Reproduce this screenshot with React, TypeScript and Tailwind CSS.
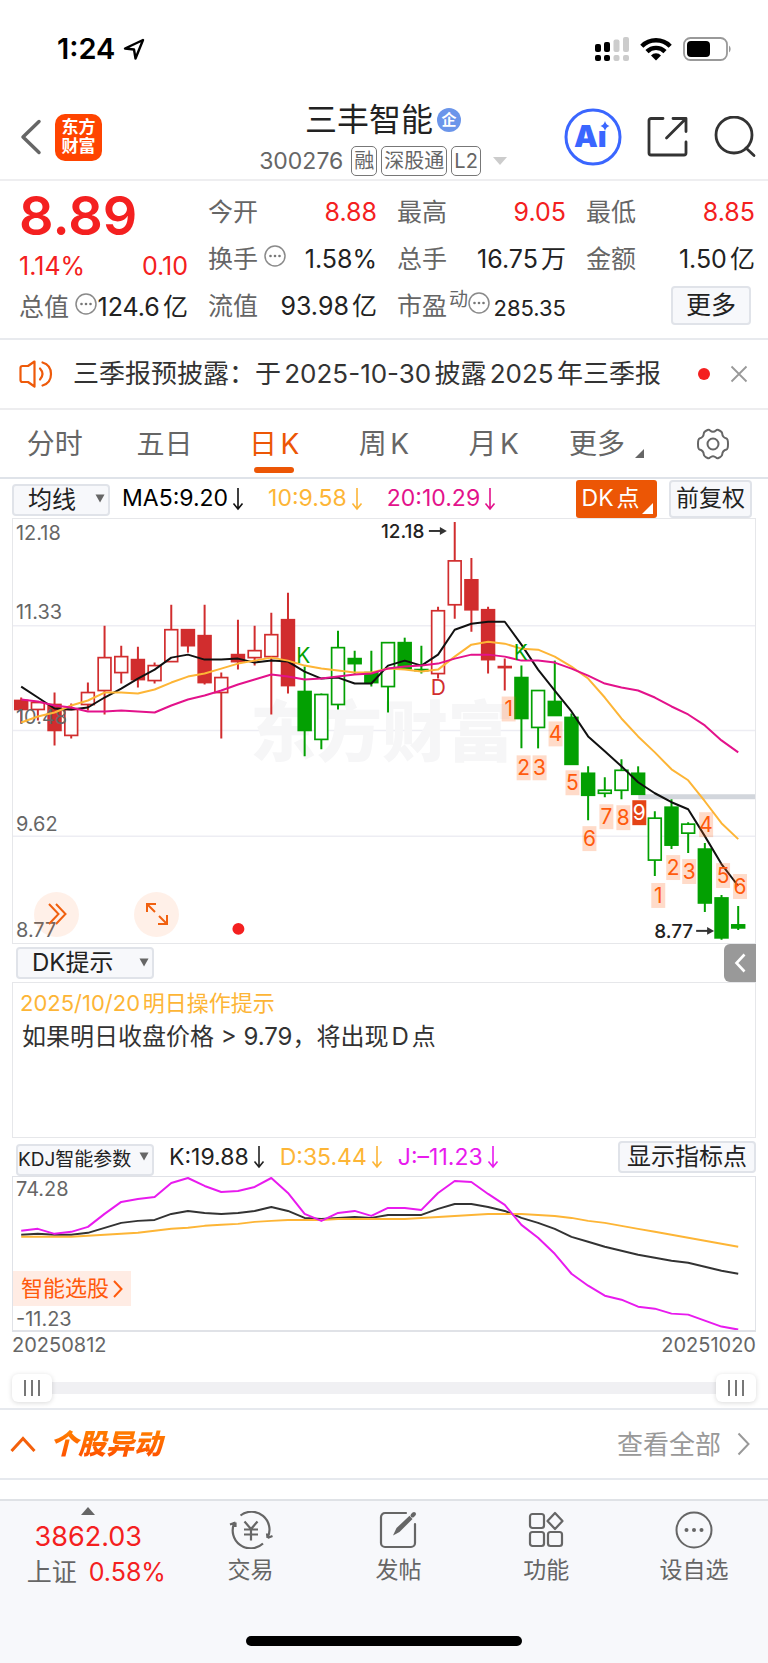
import React from "react";

type Candle = [number, number, number, number, "r" | "g", boolean];

// high, body top, body bottom, low, colour, filled
const CANDLES: Candle[] = [
  [179, 182, 191, 205, "r", true],
  [183, 184, 191, 202, "r", false],
  [174, 186, 212, 227, "r", true],
  [185, 191, 217, 220, "r", false],
  [164, 174, 186, 192, "r", false],
  [107, 139, 172, 196, "r", false],
  [127, 138, 154, 165, "r", false],
  [128, 141, 161, 169, "r", true],
  [144, 147, 162, 165, "r", false],
  [86, 111, 143, 143, "r", false],
  [111, 111, 127, 134, "r", true],
  [86, 117, 164, 166, "r", true],
  [154, 159, 174, 220, "r", false],
  [101, 136, 143, 151, "r", true],
  [107, 132, 139, 147, "r", false],
  [94, 116, 138, 196, "r", false],
  [74, 101, 167, 175, "r", true],
  [148, 173, 212, 238, "g", true],
  [175, 176, 221, 231, "g", false],
  [112, 129, 186, 191, "g", false],
  [132, 140, 145, 156, "g", true],
  [132, 154, 164, 168, "g", true],
  [124, 124, 168, 194, "g", false],
  [119, 124, 150, 150, "g", true],
  [127, 151, 152, 155, "g", true],
  [88, 92, 155, 160, "r", false],
  [3, 42, 86, 100, "r", false],
  [39, 61, 91, 113, "r", true],
  [88, 91, 141, 155, "r", true],
  [140, 148, 149, 172, "r", true],
  [147, 159, 200, 230, "g", true],
  [172, 172, 209, 230, "g", false],
  [142, 183, 197, 197, "g", true],
  [195, 199, 246, 246, "g", true],
  [248, 255, 277, 302, "g", true],
  [259, 272, 275, 279, "g", false],
  [241, 252, 272, 281, "g", false],
  [248, 255, 276, 276, "g", true],
  [293, 300, 342, 358, "g", false],
  [281, 289, 327, 331, "g", true],
  [304, 306, 315, 335, "g", false],
  [325, 331, 385, 394, "g", true],
  [377, 380, 420, 422, "g", true],
  [388, 407, 410, 412, "g", true],
];

const MA5 = [168, 179, 190, 191, 189, 179, 170, 160, 151, 139, 136, 141, 141, 140, 144, 142, 143, 153, 160, 159, 165, 165, 147, 142, 147, 136, 111, 105, 103, 103, 126, 151, 172, 193, 218, 233, 248, 264, 275, 284, 291, 318, 346, 368];
const MA10 = [204, 198, 194, 187, 182, 174, 174, 175, 171, 164, 158, 155, 150, 145, 142, 139, 142, 147, 150, 152, 154, 154, 150, 151, 153, 151, 138, 126, 123, 125, 130, 131, 138, 148, 160, 179, 200, 218, 234, 251, 262, 283, 305, 321];
const MA20 = [181, 183, 187, 189, 193, 193, 192, 193, 194, 187, 181, 177, 172, 166, 161, 156, 158, 161, 160, 158, 156, 155, 150, 148, 147, 145, 140, 136, 136, 138, 142, 142, 144, 150, 157, 165, 169, 172, 179, 188, 196, 207, 222, 234];
const K_LINE = [58, 57, 58, 58, 56, 51, 46, 44, 43, 37, 34, 36, 37, 36, 34, 30, 34, 41, 42, 41, 40, 41, 38, 38, 38, 32, 27, 27, 30, 34, 41, 46, 52, 60, 65, 70, 74, 78, 81, 84, 86, 90, 94, 97];
const D_LINE = [60, 60, 60, 60, 59, 58, 57, 56, 54, 52, 51, 49, 48, 47, 45, 44, 43, 43, 43, 42, 42, 42, 42, 42, 41, 40, 39, 38, 37, 37, 37, 38, 39, 41, 44, 46, 49, 52, 55, 58, 61, 64, 67, 70];
const J_LINE = [54, 52, 57, 55, 50, 37, 25, 22, 20, 6, 1, 9, 15, 14, 10, 1, 16, 37, 44, 36, 34, 39, 31, 31, 33, 16, 4, 5, 17, 28, 48, 61, 77, 97, 109, 119, 123, 130, 132, 137, 138, 144, 150, 153];

// digit, x, y of the counting marks
const MARKS: [string, number, number][] = [
  ["1", 490, 178], ["2", 505, 237], ["3", 521, 237], ["4", 537, 203], ["5", 554, 252],
  ["6", 571, 308], ["7", 588, 286], ["8", 605, 287], ["9", 621, 282], ["1", 640, 365],
  ["2", 655, 337], ["3", 671, 341], ["4", 688, 294], ["5", 705, 345], ["6", 722, 356],
];

const GRID_LABELS: [string, number][] = [["12.18", 21], ["11.33", 100], ["10.48", 206], ["9.62", 313], ["8.77", 419]];

const xAt = (i: number) => 8.2 + i * 16.72;
const points = (ys: number[]) => ys.map((y, i) => `${xAt(i).toFixed(1)},${y}`).join(" ");

function Line({ ys, color }: { ys: number[]; color: string }) {
  return <polyline points={points(ys)} fill="none" stroke={color} strokeWidth="2" strokeLinejoin="round" />;
}

function Arrow({ x, y }: { x: number; y: number }) {
  return (
    <g stroke="#333" fill="#333">
      <path d={`M${x} ${y}h13`} strokeWidth="2" />
      <path d={`M${x + 11} ${y - 4}l7 4l-7 4z`} stroke="none" />
    </g>
  );
}

function CandleChart() {
  return (
    <svg viewBox="0 0 744 425" className="block h-auto w-full" role="img" aria-label="日K">
      {[107, 212, 318].map((y) => (
        <path key={y} d={`M0 ${y}H744`} stroke="#ededf3" strokeWidth="1.5" />
      ))}
      <text x="238" y="238" fontSize="66" fontWeight="900" fill="#f6f6f7">东方财富</text>
      <rect x="627" y="276" width="117" height="5" fill="#d2d6dc" />
      {CANDLES.map(([hi, top, bot, lo, c, filled], i) => {
        const x = xAt(i);
        const color = c === "r" ? "#d12d2e" : "#03a002";
        return (
          <g key={i} stroke={color} strokeWidth="2">
            <path d={`M${x} ${hi}V${top}M${x} ${bot}V${lo}`} />
            <rect x={x - 6.4} y={top} width="12.8" height={Math.max(bot - top, 0.5)} fill={filled ? color : "#fff"} strokeWidth="1.7" />
          </g>
        );
      })}
      {GRID_LABELS.map(([t, y]) => (
        <text key={t} x="3" y={y} fontSize="20" fill="#666">{t}</text>
      ))}
      <Line ys={MA5} color="#111" />
      <Line ys={MA10} color="#fdb536" />
      <Line ys={MA20} color="#e3128b" />
      <text x="284" y="144" fontSize="21" fill="#03a002">K</text>
      <text x="502" y="141" fontSize="21" fill="#03a002">K</text>
      <text x="419" y="176" fontSize="21" fill="#d12d2e">D</text>
      {MARKS.map(([t, x, y], i) => (
        <g key={i}>
          <rect x={x} y={y} width="14" height="25" fill={t === "9" ? "#e44316" : "#fd6a1e"} fillOpacity={t === "9" ? 1 : 0.24} />
          <text x={x + 7} y={y + 20} fontSize="21" textAnchor="middle" fill={t === "9" ? "#fff" : "#ff5a0c"}>{t}</text>
        </g>
      ))}
      <text x="369" y="19" fontSize="19" fontWeight="500" fill="#222">12.18</text>
      <Arrow x={417} y={12} />
      <text x="643" y="420" fontSize="19" fontWeight="500" fill="#222">8.77</text>
      <Arrow x={685} y={413} />
      <circle cx="226" cy="411" r="6" fill="#f42020" />
    </svg>
  );
}

function Dots() {
  return (
    <svg viewBox="0 0 22 22" className="size-[22px] shrink-0" fill="none" stroke="#8a8a8a" strokeWidth="1.5" aria-hidden="true">
      <circle cx="11" cy="11" r="10" />
      <g fill="#777" stroke="none">
        <circle cx="6.5" cy="11" r="1.3" />
        <circle cx="11" cy="11" r="1.3" />
        <circle cx="15.5" cy="11" r="1.3" />
      </g>
    </svg>
  );
}

function Down({ color }: { color: string }) {
  return (
    <svg viewBox="0 0 12 24" className="ml-1 h-6 w-3 shrink-0" fill="none" stroke={color} strokeWidth="1.6" aria-hidden="true">
      <path d="M6 1V22M1.5 16.5L6 22L10.5 16.5" />
    </svg>
  );
}

function Picker({ label, box, text }: { label: string; box: string; text: string }) {
  return (
    <div className={"relative h-8 shrink-0 " + box}>
      <select aria-label={label} className={"size-full appearance-none rounded border-2 border-[#e0e3e9] bg-[#f7f8fb] leading-7 text-[#222] " + text}>
        <option>{label}</option>
      </select>
      <svg viewBox="0 0 10 9" className="pointer-events-none absolute top-[11px] right-[5px] h-[9px] w-[10px]" fill="#666" aria-hidden="true">
        <path d="M0.5 0.5h9L5 8.5z" />
      </svg>
    </div>
  );
}

function Cell({ label, value, red, dots }: { label: string; value: string; red?: boolean; dots?: boolean }) {
  return (
    <div className="flex h-[47px] items-center justify-between whitespace-nowrap">
      <dt className="flex items-center gap-1.5 text-[25px] text-[#666]">
        {label}
        {dots && <span className="pb-2"><Dots /></span>}
      </dt>
      <dd className={red ? "text-[25px] text-[#f42020]" : "text-[25px] text-[#222]"}>{value}</dd>
    </div>
  );
}

function StatusBar() {
  return (
    <div className="flex h-[98px] items-center justify-between pr-9 pl-[57px]">
      <div className="flex items-center gap-2 text-[29px] font-semibold text-black">
        1:24
        <svg viewBox="0 0 22 22" className="size-[22px]" fill="none" stroke="#000" strokeWidth="2.4" strokeLinejoin="round" aria-hidden="true">
          <path d="M20 2L2 10.5L11 11.5L12.5 20.5Z" />
        </svg>
      </div>
      <div className="flex items-center gap-[11px]">
        <svg viewBox="0 0 34 24" className="h-6 w-[34px]" aria-hidden="true">
          <g>
            <rect x="0" y="7" width="6" height="8" rx="2" />
            <rect x="9" y="5" width="6" height="10" rx="2" />
            <rect x="0" y="18" width="6" height="6" rx="2" />
            <rect x="9" y="18" width="6" height="6" rx="2" />
          </g>
          <g fill="#ccc">
            <rect x="18.500" y="2.500" width="6" height="12.500" rx="2" />
            <rect x="28" y="0" width="6" height="15" rx="2" />
            <rect x="18.500" y="18" width="6" height="6" rx="2" />
            <rect x="28" y="18" width="6" height="6" rx="2" />
          </g>
        </svg>
        <svg viewBox="0 0 32 24" className="h-6 w-8" aria-hidden="true">
          <g fill="none" stroke="#000" strokeWidth="4.400">
            <path d="M1.800 9.200A20 20 0 0 1 30.200 9.200" />
            <path d="M7 14.600A12.700 12.700 0 0 1 25 14.600" />
          </g>
          <path d="M11 18.400A7 7 0 0 1 21 18.400L16 23.600Z" />
        </svg>
        <svg viewBox="0 0 49 24" className="h-6 w-[49px]" aria-hidden="true">
          <rect x="1" y="1" width="43" height="22" rx="6.500" fill="none" stroke="#999" strokeWidth="1.800" />
          <rect x="4" y="4" width="23" height="16" rx="4" />
          <path d="M46 8.500a4.500 4.500 0 0 1 0 7z" fill="#999" />
        </svg>
      </div>
    </div>
  );
}

function Header() {
  const tag = "rounded-[5px] border border-[#777] px-0.5 text-[20px] leading-7";
  return (
    <header className="grid h-[83px] grid-cols-[1fr_auto_1fr] border-b-2 border-[#eeeef0] pr-3 pl-5">
      <div className="flex items-center gap-[13px] pb-1">
        <button aria-label="返回">
          <svg viewBox="0 0 22 36" className="h-9 w-[22px]" fill="none" stroke="#666" strokeWidth="3.500" strokeLinecap="round" strokeLinejoin="round">
            <path d="M19 2.500L3 18L19 33.500" />
          </svg>
        </button>
        <span className="flex size-[47px] flex-col items-center justify-center rounded-[10px] bg-[#ff4400] text-[17px] leading-[19px] font-bold text-white">
          <span>东方</span>
          <span>财富</span>
        </span>
      </div>
      <div className="flex flex-col items-center pr-2.5">
        <h1 className="flex h-[44px] items-center gap-1 text-[32px] leading-10 text-[#222]">
          三丰智能
          <span className="flex size-6 items-center justify-center rounded-full bg-[#6b95ea] text-[15px] font-bold text-white">企</span>
        </h1>
        <button className="flex items-center gap-1 text-[23px] leading-[38px] text-[#666]">
          <span className="mr-1">300276</span>
          <span className={tag}>融</span>
          <span className={tag}>深股通</span>
          <span className={tag}>L2</span>
          <svg viewBox="0 0 14 8" className="ml-2 h-2 w-[14px]" fill="#ccc" aria-hidden="true"><path d="M0 0h14L7 8z" /></svg>
        </button>
      </div>
      <div className="flex items-center justify-end gap-[25px] pb-1">
        <button aria-label="Ai">
          <svg viewBox="0 0 58 58" className="size-[58px]">
            <circle cx="29" cy="29" r="27" fill="none" stroke="#3a66ff" strokeWidth="3" />
            <text x="10" y="39" fontSize="30" fontWeight="900" fill="#3a66ff">Ai</text>
            <rect x="33" y="11" width="14" height="12" fill="#fff" />
            <path d="M41 13q1 4 4.500 5q-3.500 1-4.500 5q-1-4-4.500-5q3.500-1 4.500-5z" fill="#3a66ff" />
          </svg>
        </button>
        <button aria-label="分享">
          <svg viewBox="0 0 42 42" className="size-[42px]" fill="none" stroke="#333" strokeWidth="2.800" strokeLinecap="round" strokeLinejoin="round">
            <path d="M16 2.500H4a2 2 0 0 0-2 2V37a2 2 0 0 0 2 2H37a2 2 0 0 0 2-2V26" />
            <path d="M26 2.500H39V15.500M39 2.500L19.500 22" />
          </svg>
        </button>
        <button aria-label="搜索">
          <svg viewBox="0 0 42 42" className="size-[42px]" fill="none" stroke="#333" strokeWidth="2.800" strokeLinecap="round">
            <circle cx="20" cy="19" r="18" />
            <path d="M32 32L40 39.500" />
          </svg>
        </button>
      </div>
    </header>
  );
}

function Quote() {
  return (
    <section className="grid h-[159px] grid-cols-4 gap-x-5 border-b-2 border-[#e8eaee] pt-2 pr-[13px] pl-[19px]">
      <div>
        <div className="text-[54px] leading-[54px] font-semibold text-[#f42020]">8.89</div>
        <div className="flex h-[47px] items-center justify-between text-[25px] text-[#f42020]">
          <span>1.14%</span>
          <span>0.10</span>
        </div>
        <div className="flex h-9 items-center justify-between whitespace-nowrap">
          <span className="flex items-center gap-1.5 text-[25px] text-[#666]">总值<span className="pb-2"><Dots /></span></span>
          <span className="-ml-2 text-[25px] text-[#222]">124.6亿</span>
        </div>
      </div>
      <dl>
        <Cell label="今开" value="8.88" red />
        <Cell label="换手" value="1.58%" dots />
        <Cell label="流值" value="93.98亿" />
      </dl>
      <dl>
        <Cell label="最高" value="9.05" red />
        <Cell label="总手" value="16.75万" />
        <div className="flex h-[47px] items-center justify-between whitespace-nowrap">
          <dt className="flex items-center text-[25px] text-[#666]">
            市盈<span className="pb-3 pl-0.5 text-[19px]">动</span>
            <span className="pb-2"><Dots /></span>
          </dt>
          <dd className="pt-1 text-[22px] text-[#222]">285.35</dd>
        </div>
      </dl>
      <div>
        <dl>
          <Cell label="最低" value="8.85" red />
          <Cell label="金额" value="1.50亿" />
        </dl>
        <div className="flex h-11 items-center justify-end pr-1">
          <button className="h-[39px] w-20 rounded border-2 border-[#e0e3e9] bg-[#f7f8fb] text-[25px] leading-none text-[#222]">更多</button>
        </div>
      </div>
    </section>
  );
}

function Notice() {
  return (
    <section className="flex h-[70px] items-center border-b-2 border-[#ededef] pr-5 pl-[19px] whitespace-nowrap">
      <svg viewBox="0 0 34 30" className="h-[30px] w-[34px]" fill="none" stroke="#ee5a0a" strokeWidth="2.200" strokeLinejoin="round" strokeLinecap="round" aria-hidden="true">
        <path d="M15.500 2.500L9 7H3.500a2 2 0 0 0-2 2V21a2 2 0 0 0 2 2H9L15.500 27.500Z" />
        <path d="M21 9.500q5 5.500 0 11M23.500 3.500Q32 6 32 15T23.500 26.500" />
      </svg>
      <p className="flex-1 pl-5 text-[26px] leading-9 text-[#333]">三季报预披露：于2025-10-30披露2025年三季报</p>
      <span className="mr-5 size-3 rounded-full bg-[#f42020]" />
      <button aria-label="关闭">
        <svg viewBox="0 0 18 18" className="size-[18px]" stroke="#999" strokeWidth="1.800"><path d="M1.500 1.500L16.500 16.500M16.500 1.500L1.500 16.500" /></svg>
      </button>
    </section>
  );
}

function Tabs() {
  return (
    <nav className="grid h-[69px] grid-cols-7 items-stretch border-b-2 border-[#dfe3e9] text-[28px] text-[#666]">
      {["分时", "五日", "日K", "周K", "月K"].map((t) => (
        <button key={t} className={t === "日K" ? "relative text-[#ec5605]" : ""}>
          {t}
          {t === "日K" && <span className="absolute inset-x-0 bottom-1 mx-auto h-1.5 w-10 rounded-full bg-[#ec5605]" />}
        </button>
      ))}
      <button className="flex items-center justify-center gap-2.5 pl-1.5">
        更多
        <svg viewBox="0 0 9 9" className="mt-5 size-[9px]" fill="#666" aria-hidden="true"><path d="M9 0V9H0z" /></svg>
      </button>
      <button aria-label="设置" className="flex items-center justify-center">
        <svg viewBox="0 0 34 32" className="h-8 w-[34px]" fill="none" stroke="#666" strokeWidth="2" strokeLinejoin="round">
          <path d="M11.500 2Q13 1.200 14 2.500Q17 5 20 2.500Q21 1.200 22.500 2Q26 3.500 26.200 5.500Q26.500 9.500 30.500 10.500Q32 11 32 16T30.500 21.500Q26.500 22.500 26.200 26.500Q26 28.500 22.500 30Q21 30.800 20 29.500Q17 27 14 29.500Q13 30.800 11.500 30Q8 28.500 7.800 26.500Q7.500 22.500 3.500 21.500Q2 21 2 16T3.500 10.500Q7.500 9.500 7.800 5.500Q8 3.500 11.500 2Z" />
          <circle cx="17" cy="16" r="5.500" />
        </svg>
      </button>
    </nav>
  );
}

function Averages() {
  return (
    <div className="flex h-[39px] items-center pr-4 pl-3 text-[23px] whitespace-nowrap">
      <Picker label="均线" box="w-[98px]" text="pl-[14px] text-[24px]" />
      <span className="ml-3 flex items-center text-black">MA5:9.20<Down color="#111" /></span>
      <span className="ml-6 flex items-center text-[#fdb536]">10:9.58<Down color="#fdb536" /></span>
      <span className="ml-6 flex items-center text-[#e3128b]">20:10.29<Down color="#e3128b" /></span>
      <button className="relative ml-auto h-[38px] w-[81px] rounded-[3px] bg-[#ec5605] pr-3 text-[23px] leading-none text-white">
        DK点
        <svg viewBox="0 0 11 11" className="absolute right-1 bottom-1 size-[11px]" fill="#fff" aria-hidden="true"><path d="M11 0V11H0z" /></svg>
      </button>
      <button className="ml-3 h-[38px] w-[83px] rounded border-2 border-[#e0e3e9] bg-[#f7f8fb] text-[23px] leading-none text-[#222]">前复权</button>
    </div>
  );
}

const THUMB =
  "pointer-events-none absolute inset-x-0 top-0 h-7 w-full appearance-none bg-transparent [&::-webkit-slider-thumb]:pointer-events-auto [&::-webkit-slider-thumb]:h-7 [&::-webkit-slider-thumb]:w-10 [&::-webkit-slider-thumb]:appearance-none [&::-webkit-slider-thumb]:rounded-md [&::-webkit-slider-thumb]:bg-white [&::-webkit-slider-thumb]:bg-[linear-gradient(90deg,transparent_12px,#777_12px,#777_14px,transparent_14px,transparent_19px,#777_19px,#777_21px,transparent_21px,transparent_26px,#777_26px,#777_28px,transparent_28px)] [&::-webkit-slider-thumb]:bg-[length:40px_16px] [&::-webkit-slider-thumb]:bg-center [&::-webkit-slider-thumb]:bg-no-repeat [&::-webkit-slider-thumb]:shadow-[0_1px_5px_rgba(0,0,0,0.15)]";

function Charts() {
  return (
    <section>
      <Averages />
      <div className="relative mx-3 border border-[#e6e7ea]">
        <CandleChart />
        <button aria-label="快进" className="absolute bottom-[6px] left-[21px] flex size-[45px] items-center justify-center rounded-full bg-[#fd6a1e]/10">
          <svg viewBox="0 0 20 22" className="h-[22px] w-5" fill="none" stroke="#f0600f" strokeWidth="2"><path d="M2 1L11.500 11L2 21M9 1L18.500 11L9 21" /></svg>
        </button>
        <button aria-label="全屏" className="absolute bottom-[6px] left-[121px] flex size-[45px] items-center justify-center rounded-full bg-[#fd6a1e]/10">
          <svg viewBox="0 0 24 24" className="size-6" fill="none" stroke="#f0600f" strokeWidth="2"><path d="M2 10V2H11M2 2L10 10M14 14L22 22M22 13V22H13" /></svg>
        </button>
      </div>
      <div className="mx-3 flex h-[38px] items-center justify-between pl-1">
        <Picker label="DK提示" box="w-[138px]" text="pl-[14px] text-[24px]" />
        <button aria-label="展开" className="flex h-[38px] w-8 items-center justify-center rounded-l-md bg-[#999]">
          <svg viewBox="0 0 12 20" className="h-5 w-3" fill="none" stroke="#fff" strokeWidth="2.600"><path d="M10.500 1.500L2.500 10L10.500 18.500" /></svg>
        </button>
      </div>
      <div className="mx-3 h-[156px] border border-[#e6e7ea] px-[7px] pt-1">
        <p className="text-[22px] leading-8 text-[#fdb536]">2025/10/20明日操作提示</p>
        <p className="pl-0.5 text-[24px] leading-9 text-[#333]">如果明日收盘价格 &gt; 9.79，将出现D点</p>
      </div>
      <div className="mx-3 flex h-[38px] items-center pl-1 text-[23px] whitespace-nowrap">
        <Picker label="KDJ智能参数" box="w-[138px]" text="text-[19px]" />
        <span className="ml-[15px] flex items-center text-[#222]">K:19.88<Down color="#222" /></span>
        <span className="ml-[15px] flex items-center text-[#fdb536]">D:35.44<Down color="#fdb536" /></span>
        <span className="ml-[15px] flex items-center text-[#e81bee]">J:–11.23<Down color="#e81bee" /></span>
        <button className="ml-auto h-8 w-[138px] rounded border-2 border-[#e0e3e9] bg-[#f7f8fb] text-[24px] leading-none text-[#222]">显示指标点</button>
      </div>
      <div className="relative mx-3 border border-b-2 border-[#e0e2e7]">
        <svg viewBox="0 0 744 154" className="block h-auto w-full" role="img" aria-label="KDJ">
          <text x="3" y="19" fontSize="20" fill="#666">74.28</text>
          <text x="3" y="149" fontSize="20" fill="#666">-11.23</text>
          <Line ys={K_LINE} color="#333" />
          <Line ys={D_LINE} color="#fdb536" />
          <Line ys={J_LINE} color="#e81bee" />
        </svg>
        <a href="#pick" className="absolute bottom-6 left-0 flex h-[35px] items-center gap-1 bg-[#ffece4] pr-2 pl-2 text-[22px] text-[#ff5a0c]">
          智能选股
          <svg viewBox="0 0 10 18" className="h-[18px] w-2.5" fill="none" stroke="#ff5a0c" strokeWidth="2"><path d="M1 1L8.500 9L1 17" /></svg>
        </a>
      </div>
      <div className="mx-3 flex h-[26px] items-center justify-between text-[20px] text-[#666]">
        <span>20250812</span>
        <span>20251020</span>
      </div>
      <div className="relative mx-3 mt-4 mb-1.5 h-7">
        <div className="flex h-7 items-center"><div className="h-3 w-full bg-[#f0f0f3]" /></div>
        <input type="range" aria-label="开始日期" defaultValue={0} className={THUMB} />
        <input type="range" aria-label="结束日期" defaultValue={100} className={THUMB} />
      </div>
    </section>
  );
}

function BottomNav() {
  const label = "text-[23px] leading-[34px] text-[#666]";
  const item = "flex flex-1 flex-col items-center gap-1 pt-2.5";
  return (
    <footer className="flex-1 border-t-2 border-[#dfe2e6] bg-[#f7f8fb]">
      <nav className="flex h-[135px]">
        <button className="flex w-[23%] flex-col items-center pt-1.5">
          <svg viewBox="0 0 14 8" className="h-2 w-[14px]" fill="#666" aria-hidden="true"><path d="M7 0L14 8H0z" /></svg>
          <span className="mt-1 text-[27px] leading-9 text-[#f42020]">3862.03</span>
          <span className="flex gap-3 pl-4 text-[25px] leading-[34px] text-[#666]">上证<span className="text-[#f42020]">0.58%</span></span>
        </button>
        <button className={item}>
          <svg viewBox="0 0 44 38" className="h-[38px] w-11" fill="none" stroke="#666" strokeWidth="2.200">
            <path d="M11.500 4.500A18 18 0 0 1 38.500 27M34 32.500A18 18 0 0 1 5.500 11.500M1 13.500L6.500 11.500M6.500 11.500V16M38 22.500L38.500 27M38.500 27L43.500 25" />
            <path d="M15.500 10.500L22 18L28.500 10.500M22 18V29.500M15 18.500H29M15 23.500H29" />
          </svg>
          <span className={label}>交易</span>
        </button>
        <button className={item}>
          <svg viewBox="0 0 38 38" className="size-[38px]" fill="none" stroke="#666" strokeWidth="2.200" strokeLinecap="round">
            <path d="M27 2H6a4 4 0 0 0-4 4V32a4 4 0 0 0 4 4H32a4 4 0 0 0 4-4V13" />
            <path d="M14 24.500L17.500 17L30.500 4.800L33.500 8L20.500 21Z" fill="#666" stroke="none" />
            <path d="M33.500 4.500L35 3" strokeWidth="4" />
          </svg>
          <span className={label}>发帖</span>
        </button>
        <button className={item}>
          <svg viewBox="0 0 38 38" className="size-[38px]" fill="none" stroke="#666" strokeWidth="2.200" strokeLinejoin="round">
            <rect x="3" y="3" width="14" height="14" rx="2.500" />
            <rect x="3" y="21" width="14" height="14" rx="2.500" />
            <rect x="21" y="21" width="14" height="14" rx="2.500" />
            <path d="M28 2L35.500 10L28 18L20.500 10Z" />
          </svg>
          <span className={label}>功能</span>
        </button>
        <button className={item}>
          <svg viewBox="0 0 38 38" className="size-[38px]" fill="none" stroke="#666" strokeWidth="2">
            <circle cx="19" cy="19" r="17.500" />
            <g fill="#666" stroke="none"><circle cx="11.500" cy="19" r="2" /><circle cx="19" cy="19" r="2" /><circle cx="26.500" cy="19" r="2" /></g>
          </svg>
          <span className={label}>设自选</span>
        </button>
      </nav>
      <div className="mx-auto h-2.5 w-[36%] rounded-full bg-black" />
    </footer>
  );
}

export default function App() {
  return (
    <main className="flex min-h-screen flex-col bg-white font-['Inter','Noto_Sans_CJK_SC',sans-serif] [text-autospace:normal]">
      <StatusBar />
      <Header />
      <Quote />
      <Notice />
      <Tabs />
      <Charts />
      <section className="flex h-[72px] items-center justify-between border-y-2 border-[#e6e9ee] pr-[18px] pl-2.5">
        <h2 className="flex items-center gap-3.5">
          <svg viewBox="0 0 26 16" className="h-4 w-[26px]" fill="none" stroke="#f4600c" strokeWidth="3" aria-hidden="true"><path d="M1.500 15L13 2.500L24.500 15" /></svg>
          <span className="bg-gradient-to-b from-[#ff8a00] to-[#ff3d00] bg-clip-text pr-1 text-[28px] font-black text-transparent italic">个股异动</span>
        </h2>
        <a href="#all" className="flex items-center gap-4 text-[26px] text-[#999]">
          查看全部
          <svg viewBox="0 0 13 24" className="h-6 w-[13px]" fill="none" stroke="#999" strokeWidth="2" aria-hidden="true"><path d="M1.500 1.500L11.500 12L1.500 22.500" /></svg>
        </a>
      </section>
      <div className="h-[19px]" />
      <BottomNav />
    </main>
  );
}
